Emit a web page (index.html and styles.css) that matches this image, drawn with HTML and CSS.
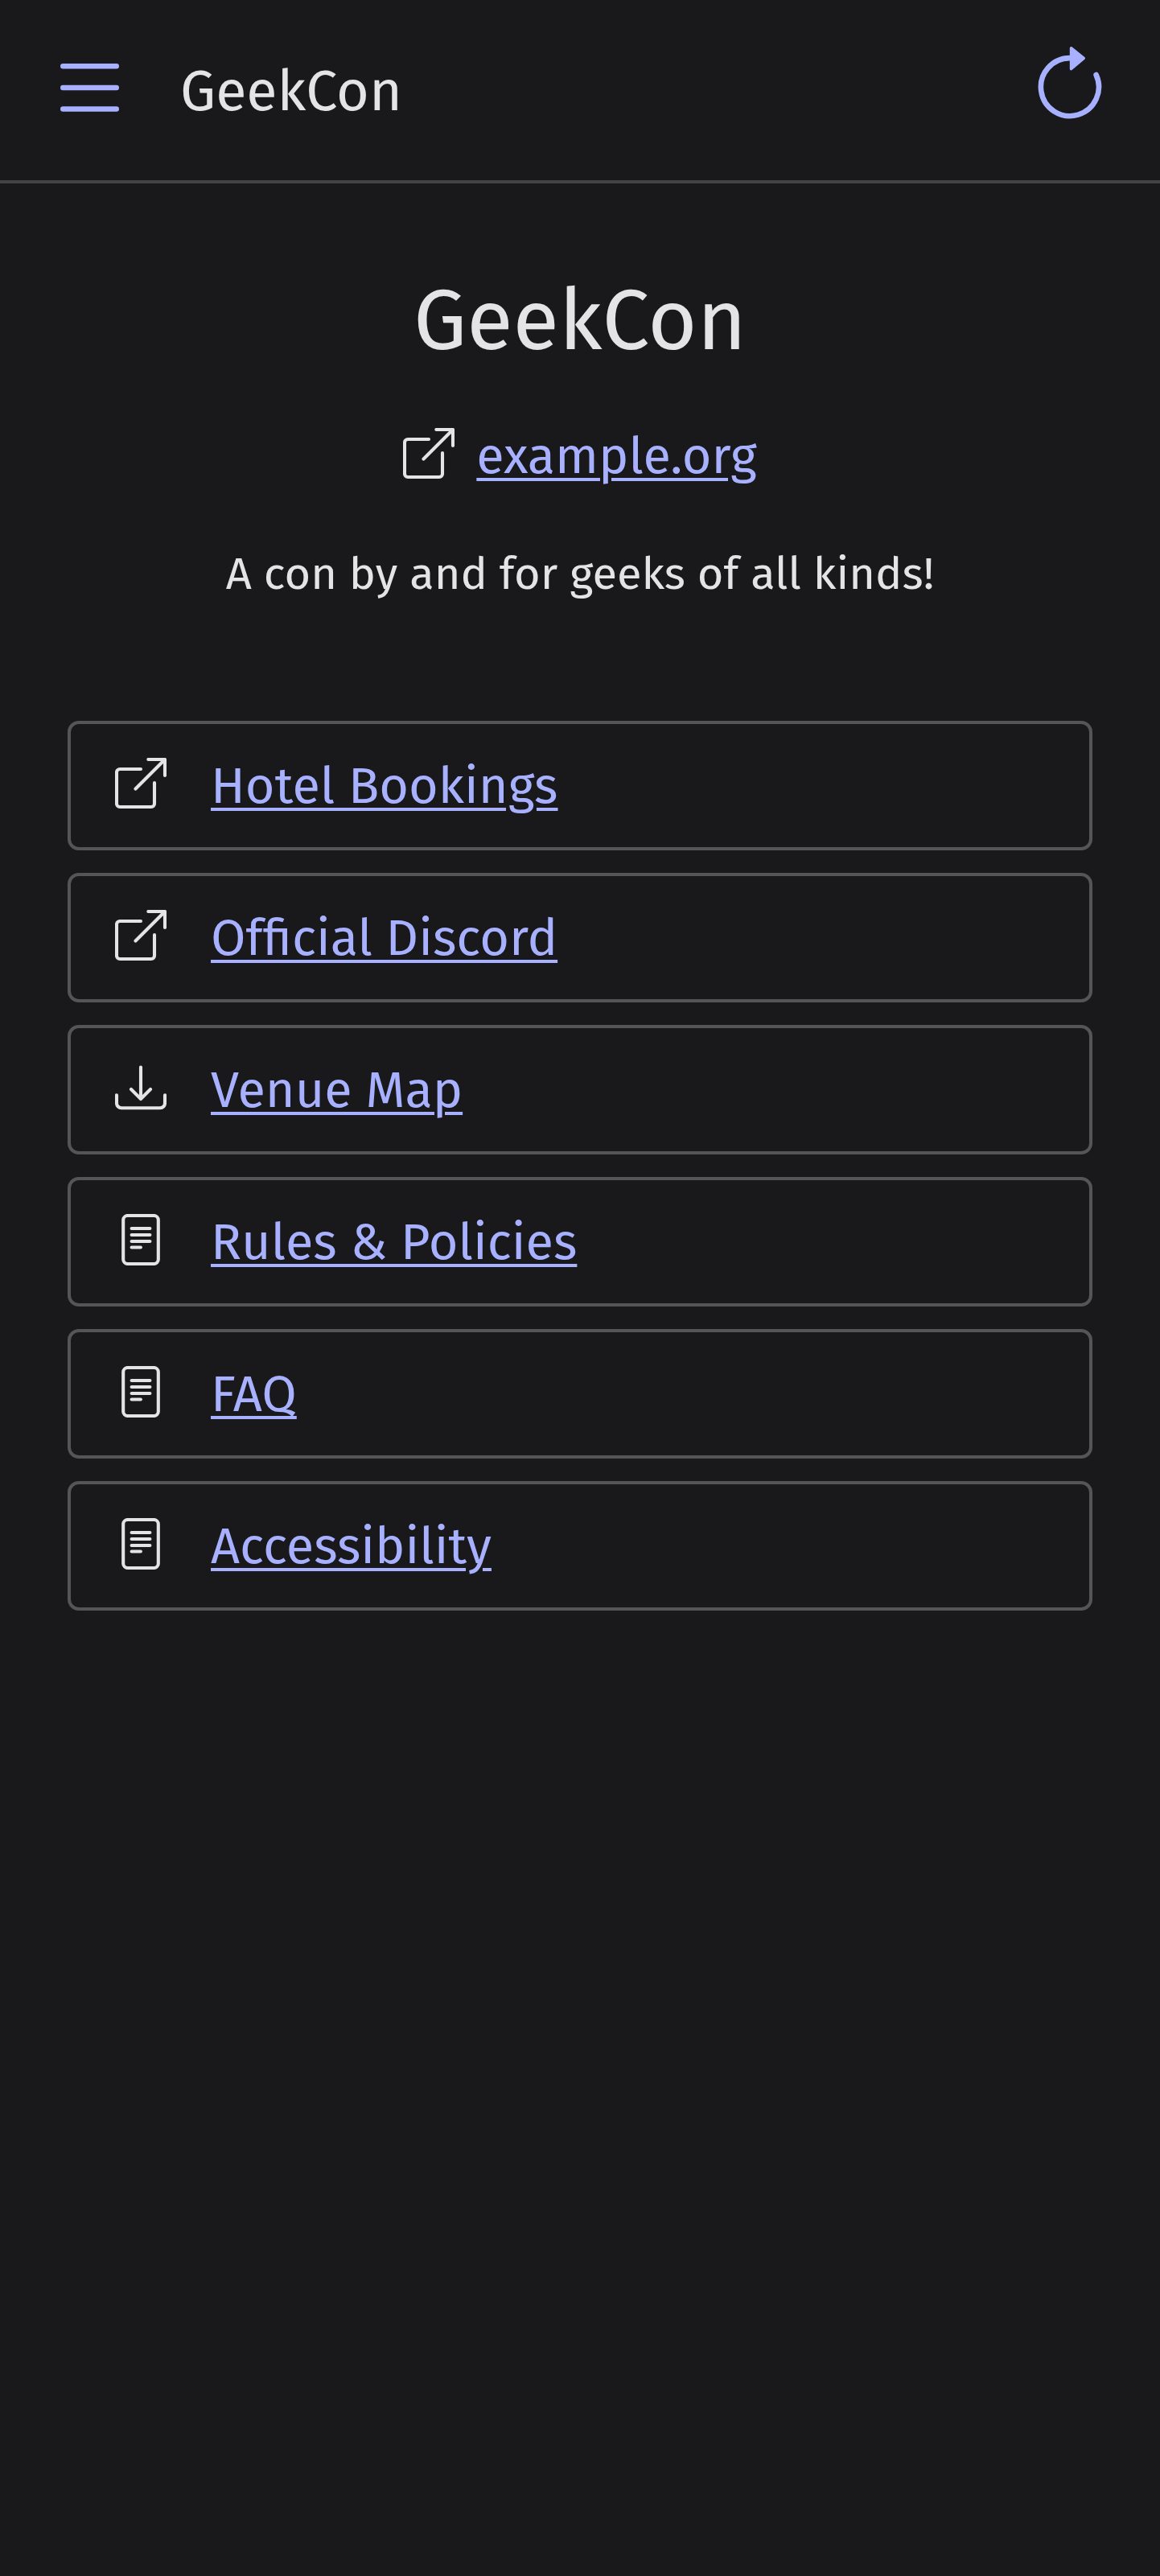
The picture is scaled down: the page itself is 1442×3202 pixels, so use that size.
FILE: index.html
```
<!DOCTYPE html>
<html lang="en">
<head>
<meta charset="utf-8">
<title>GeekCon</title>
<link rel="stylesheet" href="styles.css">
</head>
<body>
<svg class="sprite" aria-hidden="true">
  <symbol id="external" viewBox="0 0 64 64">
    <path d="M32 14H6a4 4 0 0 0-4 4v39a4 4 0 0 0 4 4h39a4 4 0 0 0 4-4V31M41.3 2H62v20M61 3 25.5 38.5"/>
  </symbol>
  <symbol id="download" viewBox="0 0 64 64">
    <path d="M2 41.2v10a6 6 0 0 0 6 6h48a6 6 0 0 0 6-6v-10M32 6.5v39M20 34l12 12 12-12"/>
  </symbol>
  <symbol id="document" viewBox="0 0 64 64">
    <rect x="10.2" y="2" width="43.6" height="60" rx="5.5"/>
    <path d="M20.6 18h22.8M20.6 26h22.8M20.6 34h22.8M20.6 41.5h11.3"/>
  </symbol>
</svg>
<header class="topbar">
  <svg class="menu" viewBox="0 0 73 60"><path d="M3.3 3.3h66.4M3.3 30h66.4M3.3 56.5h66.4"/></svg>
  <span class="topbar-title">GeekCon</span>
  <svg class="refresh" viewBox="0 0 80 92">
    <path class="ring" d="M40 15.1A36 36 0 1 0 72.6 36"/>
    <path class="head" d="M41.5 2.7v26L57.3 15.4z"/>
  </svg>
</header>
<main class="content">
  <h1>GeekCon</h1>
  <p class="site"><svg class="icon"><use href="#external"/></svg><a href="#">example.org</a></p>
  <p class="tagline">A con by and for geeks of all kinds!</p>
  <ul class="links">
    <li><svg class="icon"><use href="#external"/></svg><a href="#">Hotel Bookings</a></li>
    <li><svg class="icon"><use href="#external"/></svg><a href="#">Official Discord</a></li>
    <li><svg class="icon"><use href="#download"/></svg><a href="#">Venue Map</a></li>
    <li><svg class="icon"><use href="#document"/></svg><a href="#">Rules &amp; Policies</a></li>
    <li><svg class="icon"><use href="#document"/></svg><a class="solid" href="#">FAQ</a></li>
    <li><svg class="icon"><use href="#document"/></svg><a href="#">Accessibility</a></li>
  </ul>
</main>
</body>
</html>
```

FILE: styles.css
```
* { box-sizing: border-box; }

body {
  margin: 0;
  min-height: 3202px;
  background: #19191b;
  color: #e4e4e6;
  font-family: "Fira Sans", "Noto Sans", sans-serif;
  font-size: 56px;
  line-height: 84px;
}

.sprite { display: none; }

svg {
  flex: none;
  fill: none;
  stroke: currentColor;
  stroke-linecap: round;
  stroke-linejoin: round;
}

.topbar {
  display: flex;
  align-items: flex-start;
  height: 228px;
  padding: 0 72px 0 75px;
  border-bottom: 4px solid #434345;
}

.menu {
  width: 73px;
  height: 60px;
  margin-top: 79px;
  color: #a8b1ff;
  stroke-width: 6.6;
}

.topbar-title {
  margin: 72px auto 0 76px;
  font-size: 70px;
}

.refresh {
  width: 80px;
  height: 92px;
  margin-top: 57px;
  color: #a8b1ff;
}

.ring { stroke-width: 6.6; }
.head { fill: currentColor; stroke-width: 3.4; }

.content { padding: 108px 84px 0; }

h1 {
  margin: 0;
  font-size: 105px;
  font-weight: 400;
  line-height: 126px;
  text-align: center;
}

.site {
  display: flex;
  justify-content: center;
  align-items: center;
  gap: 27px;
  margin: 63px 0 0;
  font-size: 63px;
}

.icon {
  width: 64px;
  height: 64px;
  margin-bottom: 6px;
  stroke-width: 4.1;
}

a {
  color: #a8b1ff;
  text-decoration-thickness: 4px;
  text-underline-offset: 6px;
}

.solid { text-decoration-skip-ink: none; }

.tagline {
  margin: 63px 0 0;
  text-align: center;
}

.links {
  display: flex;
  flex-direction: column;
  gap: 28px;
  margin: 140px 0 0;
  padding: 0;
  list-style: none;
  font-size: 63px;
}

.links li {
  display: flex;
  align-items: center;
  gap: 55px;
  height: 161px;
  padding: 1px 55px 0;
  border: 4px solid #555558;
  border-radius: 14px;
}
```
